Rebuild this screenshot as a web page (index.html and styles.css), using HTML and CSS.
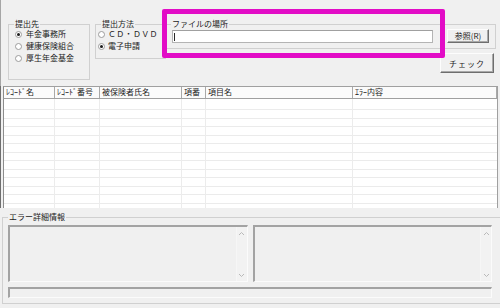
FILE: index.html
```html
<!DOCTYPE html>
<html lang="ja">
<head>
    <meta charset="UTF-8">
    <title>提出ファイルチェック</title>
    <link rel="stylesheet" href="styles.css">
</head>
<body>
<div class="window">

    <div class="top">
        <div class="group dest">
            <div class="group-title">提出先</div>
            <div class="radio checked"><span class="dot"></span>年金事務所</div>
            <div class="radio"><span class="dot"></span>健康保険組合</div>
            <div class="radio"><span class="dot"></span>厚生年金基金</div>
        </div>

        <div class="group method">
            <div class="group-title">提出方法</div>
            <div class="radio"><span class="dot"></span><span class="wide">ＣＤ・ＤＶＤ</span></div>
            <div class="radio checked"><span class="dot"></span>電子申請</div>
        </div>

        <div class="file-col">
            <div class="group file">
                <div class="group-title">ファイルの場所</div>
                <div class="file-row">
                    <div class="textbox"><span class="caret"></span></div>
                    <button class="btn browse">参照(R)</button>
                </div>
            </div>
            <button class="btn check">チェック</button>
        </div>

        <!-- annotation frame -->
        <div class="highlight"></div>
    </div>

    <div class="list">
        <div class="list-head">
            <div class="th">ﾚｺｰﾄﾞ名</div>
            <div class="th">ﾚｺｰﾄﾞ番号</div>
            <div class="th">被保険者氏名</div>
            <div class="th">項番</div>
            <div class="th">項目名</div>
            <div class="th">ｴﾗｰ内容</div>
        </div>
        <div class="list-body">
            <div class="td"></div>
            <div class="td"></div>
            <div class="td"></div>
            <div class="td"></div>
            <div class="td"></div>
            <div class="td"></div>
        </div>
    </div>

    <div class="group errors">
        <div class="group-title">エラー詳細情報</div>
        <div class="panes">
            <div class="pane">
                <div class="scroll">
                    <svg width="7" height="5" viewBox="0 0 7 5"><polyline points="1,4 3.5,1.5 6,4" fill="none" stroke="#b9b9b9" stroke-width="1"/></svg>
                    <svg width="7" height="5" viewBox="0 0 7 5"><polyline points="1,1 3.5,3.5 6,1" fill="none" stroke="#b9b9b9" stroke-width="1"/></svg>
                </div>
            </div>
            <div class="pane">
                <div class="scroll">
                    <svg width="7" height="5" viewBox="0 0 7 5"><polyline points="1,4 3.5,1.5 6,4" fill="none" stroke="#b9b9b9" stroke-width="1"/></svg>
                    <svg width="7" height="5" viewBox="0 0 7 5"><polyline points="1,1 3.5,3.5 6,1" fill="none" stroke="#b9b9b9" stroke-width="1"/></svg>
                </div>
            </div>
        </div>
        <div class="status"></div>
    </div>

</div>
</body>
</html>
```

FILE: styles.css
```css
html, body {
    margin: 0;
    padding: 0;
}
body {
    font-family: "Noto Sans CJK JP", "Noto Sans CJK SC", sans-serif;
    font-size: 8px;
    color: #1b1b1b;
    background-color: #f0f0f0;
}
.window {
    position: relative;
    width: 500px;
    height: 308px;
    overflow: hidden;
    background-color: #f0f0f0;
}

/* group boxes */
.group {
    border: 1px solid #d0d0d0;
    box-sizing: border-box;
}
.group-title {
    display: table;
    margin: -6px 0 0 5px;
    padding: 0 1px;
    height: 9px;
    line-height: 9px;
    background-color: #f0f0f0;
    white-space: nowrap;
}

.top {
    position: relative;
    display: flex;
    align-items: flex-start;
    height: 86px;
    padding: 24px 0 0 7px;
    box-sizing: border-box;
    border-left: 1px solid #a6a6a6;
}
.dest {
    width: 82px;
    height: 56px;
}
.method {
    width: 71px;
    height: 35px;
    margin-left: 5px;
}
.method .radio {
    padding-left: 2px;
}
.method .radio .dot {
    margin-right: 3px;
}
.method .radio:first-of-type {
    margin-top: 2px;
}

.radio {
    display: flex;
    align-items: center;
    height: 12px;
    line-height: 12px;
    padding-left: 6px;
    white-space: nowrap;
}
.radio .dot {
    position: relative;
    flex-shrink: 0;
    width: 5px;
    height: 5px;
    margin-right: 4px;
    border: 1px solid #9c9c9c;
    border-radius: 50%;
    background-color: #fff;
}
.radio.checked .dot::after {
    content: "";
    position: absolute;
    left: 1px;
    top: 1px;
    width: 3px;
    height: 3px;
    border-radius: 50%;
    background-color: #1b1b1b;
}
.wide {
    letter-spacing: 0.3px;
}

.file-col {
    display: flex;
    flex-direction: column;
    align-items: flex-end;
}
.file {
    width: 331px;
    height: 25px;
    margin-left: -1px;
}
.file-row {
    display: flex;
    align-items: center;
    padding: 1px 0 0 6px;
}
.textbox {
    position: relative;
    width: 259px;
    height: 11px;
    border: 1px solid #b4b4b4;
    border-top-color: #a0a0a0;
    background-color: #fff;
}
.caret {
    position: absolute;
    left: 1px;
    top: 2px;
    width: 1px;
    height: 8px;
    background-color: #2a2a2a;
}

.btn {
    font-family: inherit;
    font-size: 8px;
    color: #1b1b1b;
    padding: 0;
    background-color: #f0f0f0;
    border: 1px solid;
    border-color: #fdfdfd #6e6e6e #6e6e6e #fdfdfd;
    box-shadow: inset -1px -1px 0 #a9a9a9;
    cursor: pointer;
}
.browse {
    width: 42px;
    height: 14px;
    margin-left: 14px;
    line-height: 12px;
}
.check {
    width: 54px;
    height: 20px;
    margin: 4px 2px 0 0;
    letter-spacing: 1px;
}

.highlight {
    position: absolute;
    left: 161px;
    top: 9px;
    width: 283px;
    height: 49px;
    box-sizing: border-box;
    border: 5px solid #e20cc6;
    border-radius: 2px;
}

/* list view */
.list {
    height: 122px;
    margin-right: 2px;
    border-left: 1px solid #6f6f6f;
    display: flex;
    flex-direction: column;
}
.list-head,
.list-body {
    display: grid;
    grid-template-columns: 51px 45px 82px 24px 147px 1fr;
    margin-left: 2px;
    border-left: 1px solid #8c8c8c;
    border-right: 1px solid #a0a0a0;
}
.list-head {
    height: 11px;
    border-top: 1px solid #a0a0a0;
    border-bottom: 1px solid #a0a0a0;
    background-color: #fbfbfb;
}
.th {
    padding-left: 2px;
    line-height: 10px;
    border-right: 1px solid #a9a9a9;
    white-space: nowrap;
    overflow: hidden;
}
.list-body {
    flex: 1;
    background:
        linear-gradient(#fff, #fff) top / 100% 10px no-repeat,
        repeating-linear-gradient(to bottom,
            transparent 0 2px, #ebebeb 2px 3px,
            transparent 3px 10px, #ebebeb 10px 11px,
            transparent 11px 17px);
    background-color: #fff;
}
.td {
    border-right: 1px solid #ececec;
}
.td:last-child {
    border-right: none;
}

/* error details */
.errors {
    width: 520px;
    height: 87px;
    margin: 9px 0 0 2px;
    padding-left: 5px;
}
.errors .group-title {
    margin-left: 0;
}
.panes {
    display: flex;
    gap: 5px;
    width: 484px;
    margin-top: 4px;
}
.pane,
.status {
    box-sizing: border-box;
    background-color: #f0f0f0;
    border-top: 2px solid #a3a3a3;
    border-left: 2px solid #a3a3a3;
    border-right: 1px solid #fbfbfb;
    border-bottom: 1px solid #fbfbfb;
}
.pane {
    flex: 1;
    height: 57px;
    display: flex;
    justify-content: flex-end;
}
.scroll {
    width: 11px;
    display: flex;
    flex-direction: column;
    justify-content: space-between;
    align-items: center;
    padding: 4px 0 3px;
    box-sizing: border-box;
    border-left: 1px solid #f6f6f6;
    background-color: #f2f2f2;
}
.status {
    width: 484px;
    height: 11px;
    margin-top: 5px;
}
```
